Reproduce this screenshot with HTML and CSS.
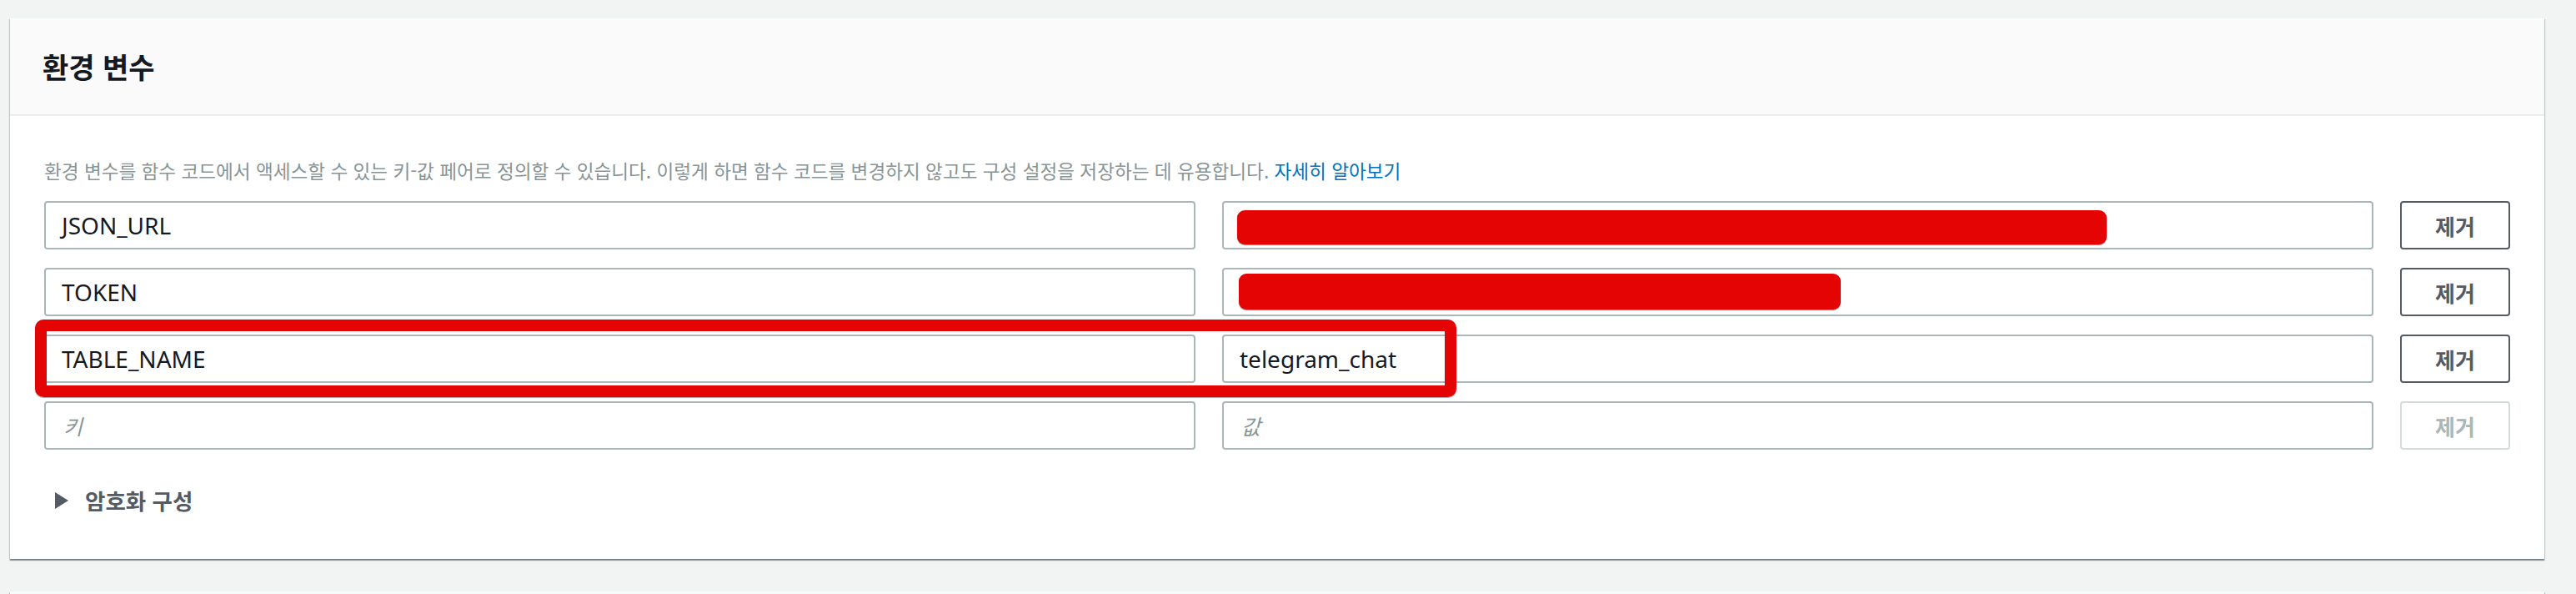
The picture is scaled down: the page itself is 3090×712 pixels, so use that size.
FILE: index.html
```html
<!DOCTYPE html>
<html lang="ko">
<head>
<meta charset="utf-8">
<title>환경 변수</title>
<link rel="stylesheet" href="styles.css">
</head>
<body>
<div class="page">
  <section class="card">
    <div class="card-header">
      <h2 class="title">환경 변수</h2>
    </div>
    <div class="card-body">
      <p class="desc">환경 변수를 함수 코드에서 액세스할 수 있는 키-값 페어로 정의할 수 있습니다. 이렇게 하면 함수 코드를 변경하지 않고도 구성 설정을 저장하는 데 유용합니다. <a class="link" href="#">자세히 알아보기</a></p>
      <div class="env-list">
        <div class="env-row">
          <div class="field"><span class="field-text">JSON_URL</span></div>
          <div class="field"><span class="redact redact-url"></span></div>
          <button class="btn">제거</button>
        </div>
        <div class="env-row">
          <div class="field"><span class="field-text">TOKEN</span></div>
          <div class="field"><span class="redact redact-token"></span></div>
          <button class="btn">제거</button>
        </div>
        <div class="env-row env-row-marked">
          <div class="field"><span class="field-text">TABLE_NAME</span></div>
          <div class="field"><span class="field-text">telegram_chat</span></div>
          <button class="btn">제거</button>
          <div class="highlight-box"></div>
        </div>
        <div class="env-row">
          <div class="field"><span class="placeholder">키</span></div>
          <div class="field"><span class="placeholder">값</span></div>
          <button class="btn btn-disabled" disabled>제거</button>
        </div>
      </div>
      <div class="expander"><span class="caret"></span><span class="expander-label">암호화 구성</span></div>
    </div>
  </section>
  <section class="card card-next"></section>
</div>
</body>
</html>
```

FILE: styles.css
```css
* {
  box-sizing: border-box;
}

html, body {
  margin: 0;
  padding: 0;
  background: #f2f3f3;
  font-family: "Noto Sans", "Noto Sans CJK KR", sans-serif;
}

.page {
  padding: 22px 38px 0 12px;
  height: 712px;
  overflow: hidden;
}

.card {
  background: #ffffff;
  box-shadow: 0 2px 1px 0 rgba(0, 28, 36, 0.35), 1px 1px 1px 0 rgba(0, 28, 36, 0.15), -1px 1px 1px 0 rgba(0, 28, 36, 0.15);
}

.card-header {
  height: 117px;
  background: #fafafa;
  border-bottom: 2px solid #eaeded;
  display: flex;
  align-items: center;
  padding-left: 39px;
}

.title {
  margin: 0;
  font-family: "Noto Sans CJK KR", sans-serif;
  font-size: 34px;
  font-weight: 700;
  color: #16191f;
  line-height: 40px;
}

.card-body {
  padding: 48px 41px 52px 41px;
}

.desc {
  margin: 0 0 18px 0;
  font-family: "Noto Sans CJK KR", sans-serif;
  font-size: 22.6px;
  line-height: 36px;
  color: #879596;
  white-space: nowrap;
}

.link {
  color: #0073bb;
  text-decoration: none;
}

.env-list {
  display: flex;
  flex-direction: column;
  gap: 22px;
}

.env-row {
  display: grid;
  grid-template-columns: 1fr 1fr 132px;
  column-gap: 32px;
  position: relative;
}

.field {
  position: relative;
  height: 58px;
  border: 2px solid #aab7b8;
  border-radius: 4px;
  background: #ffffff;
  display: flex;
  align-items: center;
  padding: 0 19px;
  font-size: 28px;
  color: #16191f;
}

.placeholder {
  font-family: "Noto Sans CJK KR", sans-serif;
  font-style: italic;
  font-size: 25px;
  color: #879596;
  padding-left: 2px;
}

.redact {
  position: absolute;
  background: #e40404;
  border-radius: 9px;
  box-shadow: 0 1px 1px rgba(60, 60, 60, 0.6);
}

.redact-url {
  left: 16px;
  top: 9px;
  width: 1043px;
  height: 41px;
}

.redact-token {
  left: 18px;
  top: 5px;
  width: 722px;
  height: 43px;
}

.btn {
  height: 58px;
  border: 2px solid #545b64;
  border-radius: 4px;
  background: #ffffff;
  font-family: "Noto Sans CJK KR", sans-serif;
  font-size: 26px;
  font-weight: 700;
  color: #545b64;
  padding: 0;
}

.btn-disabled {
  border-color: #d5dbdb;
  color: #aab7b8;
}

.highlight-box {
  position: absolute;
  left: -11px;
  top: -18px;
  width: 1705px;
  height: 93px;
  border: 14px solid #e40404;
  border-radius: 10px;
  box-shadow: 0 1px 1px rgba(60, 60, 60, 0.5);
  pointer-events: none;
}

.expander {
  margin-top: 43px;
  height: 36px;
  display: flex;
  align-items: center;
  color: #545b64;
}

.caret {
  width: 0;
  height: 0;
  margin-left: 13px;
  margin-right: 20px;
  border-left: 16px solid #545b64;
  border-top: 10.5px solid transparent;
  border-bottom: 10.5px solid transparent;
}

.expander-label {
  font-family: "Noto Sans CJK KR", sans-serif;
  font-size: 26.5px;
  font-weight: 700;
  line-height: 36px;
}

.card-next {
  margin-top: 39px;
  height: 40px;
  background: #fafafa;
}
```
